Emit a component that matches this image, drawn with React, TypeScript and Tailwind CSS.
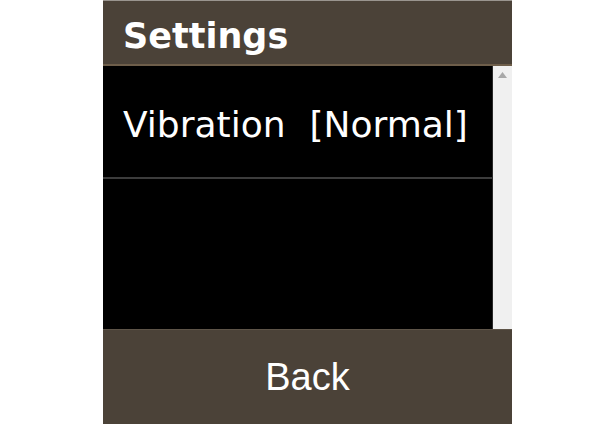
export default function App() {
  return (
    <div className="flex h-[424px] w-[615px] justify-center bg-white">
      <div className="flex w-[409px] flex-col">
        <div className="flex h-[66px] items-center border-t border-b-2 border-t-[#9a958f] border-b-[#6e5e4a] bg-[#4b4238] pl-5 pt-[7px] text-[35px] font-bold text-white [font-family:'DejaVu_Sans',sans-serif]">
          Settings
        </div>
        <div className="flex h-[263px] bg-black">
          <div className="flex-1">
            <div className="flex h-[113px] items-center border-b-2 border-[#3c3c3c] pl-5 pt-[6px] text-[36px] text-white [font-family:'DejaVu_Sans',sans-serif]">
              <span>Vibration</span>
              <span className="ml-[24px]">[Normal]</span>
            </div>
          </div>
          <div className="flex w-[20px] justify-center border-l border-[#2a2a2a] bg-[#f0f0f0] pt-[6px]">
            <svg width="9" height="6" viewBox="0 0 9 6">
              <path d="M4.5 0 L9 6 L0 6 Z" fill="#a8a8a8" />
            </svg>
          </div>
        </div>
        <div className="flex flex-1 items-center justify-center border-t border-[#5e5448] bg-[#4b4238] text-[38px] text-white [font-family:'Liberation_Sans',sans-serif]">
          Back
        </div>
      </div>
    </div>
  )
}
